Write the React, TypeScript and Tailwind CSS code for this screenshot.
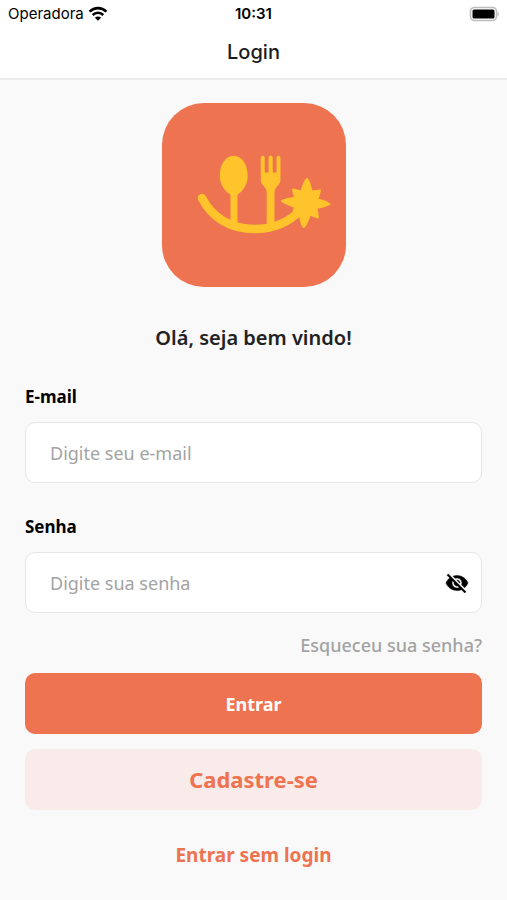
import { useState } from "react";
import type { InputHTMLAttributes, ReactNode } from "react";
import { MdVisibility } from "react-icons/md";

function StatusBar() {
  return (
    <div className="grid grid-cols-3 items-center h-7 px-2 text-black">
      <div className="flex items-center gap-1 text-[15px]">
        <span>Operadora</span>
        <svg viewBox="0 0 20 15" className="w-5 h-4" fill="none" stroke="currentColor">
          <path d="M1.6 5.1C6.4.4 13.6.4 18.4 5.1" strokeWidth="2.6" />
          <path d="M4.7 8.5c3-2.9 7.6-2.9 10.6 0" strokeWidth="2.5" />
          <path d="M10 14.2 6.9 11.2c1.7-1.6 4.5-1.6 6.2 0z" fill="currentColor" stroke="none" />
        </svg>
      </div>
      <span className="text-center text-[15px] font-semibold">10:31</span>
      <svg viewBox="0 0 30 16" className="w-[30px] h-4 justify-self-end">
        <rect x="1.5" y="1.5" width="26" height="13" rx="4" fill="#fff" stroke="#bdbdbd" strokeWidth="1.6" />
        <rect x="3.5" y="3.5" width="22" height="9" rx="1.5" fill="#000" />
        <path d="M28.6 5.6c1.7.8 1.7 4 0 4.8z" fill="#bdbdbd" />
      </svg>
    </div>
  );
}

function Logo() {
  return (
    <svg
      viewBox="0 0 184 184"
      className="w-46 h-46 rounded-[42px] bg-[#ee7351]"
      fill="#ffc32b"
      role="img"
      aria-label="Logo"
    >
      {/* smile */}
      <path d="M40 95C50 115 69 126 93 126c18 0 33-6 46-19" fill="none" stroke="#ffc32b" strokeWidth="8.5" strokeLinecap="round" />
      {/* spoon */}
      <path d="M71.7 52.7c8 0 14 8.5 14 20 0 8-4 15-10.2 19V124h-7V91.7c-6.5-4-10.7-11-10.7-19 0-11.5 6-20 13.9-20z" />
      {/* fork */}
      <path d="M98.7 54.7a2 2 0 0 1 4 0V69.5h3.8V54.7a2.1 2.1 0 0 1 4.2 0V69.5h3.8V54.7a2 2 0 0 1 4 0V77c0 5-6 7-6 12v34h-7.8V89c0-5-6-7-6-12z" />
      {/* star */}
      <path
        d="M139.5 88.5Q142 79 145 76 147.5 79 149.5 88.5L158 87.500 155.500 96.500Q163 98 167.500 101.200 162 104 154.500 105L156 114.500 148 111.500Q145 121 141.700 124 139 121 138 111.500L130.500 112 133 104Q124 101 120 98 125 95.500 133 95L131 86.500z"
        stroke="#ffc32b"
        strokeWidth="2"
        strokeLinejoin="round"
      />
    </svg>
  );
}

function EyeOff() {
  return (
    <svg viewBox="0 0 24 24" className="w-6 h-6" fill="currentColor" stroke="currentColor" strokeWidth="0.5">
      <path d="M12 7c2.76 0 5 2.24 5 5 0 .65-.13 1.26-.36 1.83l2.92 2.92c1.51-1.26 2.7-2.89 3.43-4.75-1.73-4.39-6-7.5-11-7.5-1.4 0-2.74.25-3.98.7l2.16 2.16C10.74 7.13 11.35 7 12 7zM2 4.27l2.28 2.28.46.46C3.08 8.3 1.78 10.02 1 12c1.73 4.39 6 7.5 11 7.5 1.55 0 3.03-.3 4.38-.84l.42.42L19.73 22 21 20.73 3.27 3 2 4.27zM7.53 9.8l1.55 1.55c-.05.21-.08.43-.08.65 0 1.66 1.34 3 3 3 .22 0 .44-.03.65-.08l1.55 1.55c-.67.33-1.41.53-2.2.53-2.76 0-5-2.24-5-5 0-.79.2-1.53.53-2.2zm4.31-.78l3.15 3.15.02-.16c0-1.66-1.34-3-3-3l-.17.01z" />
    </svg>
  );
}

type FieldProps = InputHTMLAttributes<HTMLInputElement> & {
  id: string;
  label: string;
  children?: ReactNode;
};

function Field({ id, label, children, ...props }: FieldProps) {
  return (
    <div className="flex flex-col gap-[11px]">
      <label htmlFor={id} className="text-[17px] leading-7 font-bold text-black">
        {label}
      </label>
      <div className="flex items-center h-[61px] rounded-[10px] border border-[#e6e6e6] bg-white pl-6 pr-3">
        <input
          id={id}
          className="min-w-0 grow h-full bg-transparent text-lg text-black placeholder:text-[#a3a3a3] outline-none"
          {...props}
        />
        {children}
      </div>
    </div>
  );
}

export default function App() {
  const [visible, setVisible] = useState(false);

  return (
    <div className="min-h-screen bg-[#f9f9f9] font-['Inter',sans-serif]">
      <header className="bg-white border-b-2 border-[#ebebeb]">
        <StatusBar />
        <h1 className="h-[50px] text-center text-xl leading-12 font-medium text-[#1c1c1e]">Login</h1>
      </header>

      <main className="flex flex-col px-[25px] pt-[23px] pb-6 font-['Noto_Sans',sans-serif]">
        <div className="flex justify-center">
          <Logo />
        </div>
        <h2 className="mt-[35px] text-center text-xl leading-8 font-semibold text-[#222]">Olá, seja bem vindo!</h2>

        <form className="mt-[29px] flex flex-col" onSubmit={(e) => e.preventDefault()}>
          <div className="flex flex-col gap-[30px]">
            <Field id="email" label="E-mail" type="email" placeholder="Digite seu e-mail" />
            <Field id="password" label="Senha" type={visible ? "text" : "password"} placeholder="Digite sua senha">
              <button
                type="button"
                aria-label="Mostrar senha"
                className="text-2xl text-black"
                onClick={() => setVisible(!visible)}
              >
                {visible ? <MdVisibility /> : <EyeOff />}
              </button>
            </Field>
          </div>
          <a href="#" className="mt-[18px] self-end text-lg leading-7 font-medium text-[#a3a3a3]">
            Esqueceu sua senha?
          </a>
          <button type="submit" className="mt-[14px] h-[61px] rounded-[10px] bg-[#ee7351] text-lg font-bold text-white">
            Entrar
          </button>
          <button type="button" className="mt-[15px] h-[61px] rounded-[10px] bg-[#f9ebe9] text-[22px] font-bold text-[#ee7351]">
            Cadastre-se
          </button>
          <button type="button" className="mt-[29px] self-center text-[19px] leading-8 font-bold text-[#ee7351]">
            Entrar sem login
          </button>
        </form>
      </main>
    </div>
  );
}
